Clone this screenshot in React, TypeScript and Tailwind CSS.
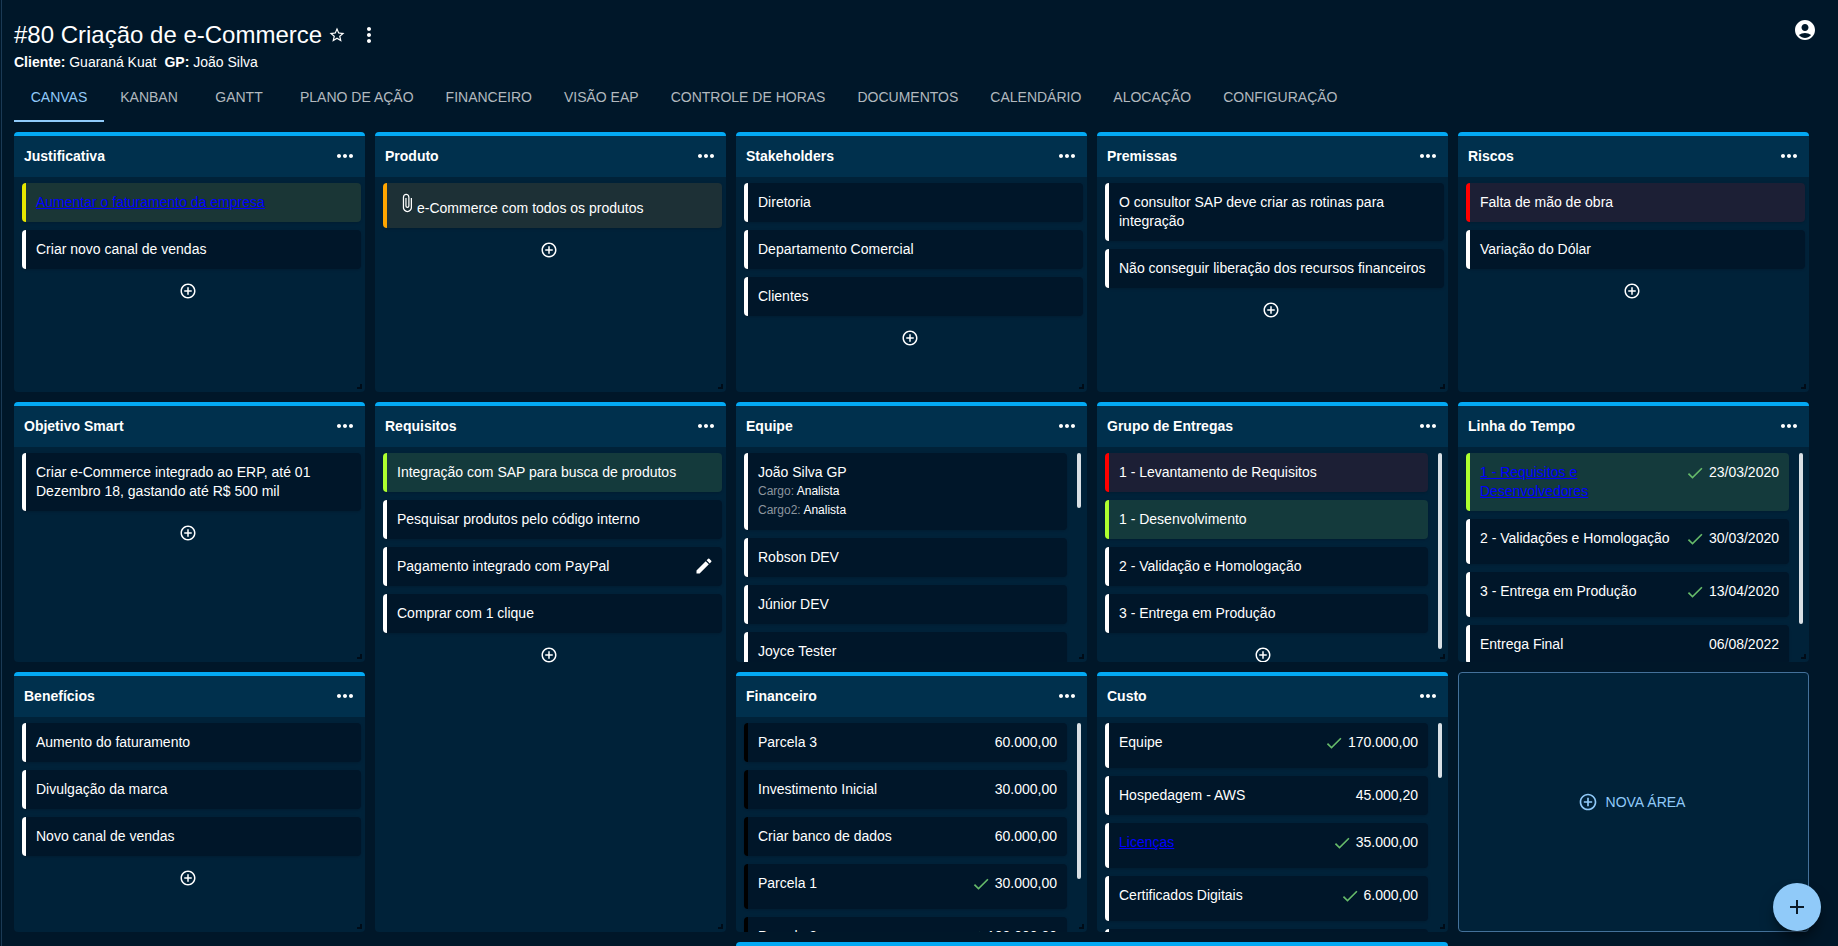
import type { ReactNode } from 'react';
import {
  MdAccountCircle,
  MdAdd,
  MdAddCircleOutline,
  MdAttachFile,
  MdCheck,
  MdEdit,
  MdMoreHoriz,
  MdMoreVert,
  MdStarBorder,
} from 'react-icons/md';

type Tone = 'white' | 'black' | 'yellow' | 'orange' | 'red' | 'green';

interface Item {
  text: string;
  tone?: Tone;
  link?: boolean;
  attachment?: boolean;
  editing?: boolean;
  value?: string;
  done?: boolean;
  details?: [string, string][];
}

interface Area {
  title: string;
  items: Item[];
  className?: string;
  // height of the scroll thumb, only for areas that overflow
  thumb?: string;
}

const tones: Record<Tone, string> = {
  white: 'border-white bg-[#001629]',
  black: 'border-black bg-[#001629]',
  yellow: 'border-[#e6e600] bg-[#1a3636]',
  orange: 'border-[#ffa500] bg-[#1d3036]',
  red: 'border-[#ff0000] bg-[#1c1f35]',
  green: 'border-[#adff2f] bg-[#143a3c]',
};

const tabs = [
  'CANVAS',
  'KANBAN',
  'GANTT',
  'PLANO DE AÇÃO',
  'FINANCEIRO',
  'VISÃO EAP',
  'CONTROLE DE HORAS',
  'DOCUMENTOS',
  'CALENDÁRIO',
  'ALOCAÇÃO',
  'CONFIGURAÇÃO',
];

const areas: Area[] = [
  {
    title: 'Justificativa',
    items: [
      { text: 'Aumentar o faturamento da empresa', tone: 'yellow', link: true },
      { text: 'Criar novo canal de vendas' },
    ],
  },
  {
    title: 'Produto',
    items: [{ text: 'e-Commerce com todos os produtos', tone: 'orange', attachment: true }],
  },
  {
    title: 'Stakeholders',
    items: [{ text: 'Diretoria' }, { text: 'Departamento Comercial' }, { text: 'Clientes' }],
  },
  {
    title: 'Premissas',
    items: [
      { text: 'O consultor SAP deve criar as rotinas para integração' },
      { text: 'Não conseguir liberação dos recursos financeiros' },
    ],
  },
  {
    title: 'Riscos',
    items: [{ text: 'Falta de mão de obra', tone: 'red' }, { text: 'Variação do Dólar' }],
  },
  {
    title: 'Objetivo Smart',
    items: [{ text: 'Criar e-Commerce integrado ao ERP, até 01 Dezembro 18, gastando até R$ 500 mil' }],
  },
  {
    title: 'Requisitos',
    className: 'row-span-2',
    items: [
      { text: 'Integração com SAP para busca de produtos', tone: 'green' },
      { text: 'Pesquisar produtos pelo código interno' },
      { text: 'Pagamento integrado com PayPal', editing: true },
      { text: 'Comprar com 1 clique' },
    ],
  },
  {
    title: 'Equipe',
    thumb: 'h-[55px]',
    items: [
      {
        text: 'João Silva GP',
        details: [
          ['Cargo', 'Analista'],
          ['Cargo2', 'Analista'],
        ],
      },
      { text: 'Robson DEV' },
      { text: 'Júnior DEV' },
      { text: 'Joyce Tester' },
    ],
  },
  {
    title: 'Grupo de Entregas',
    thumb: 'h-[196px]',
    items: [
      { text: '1 - Levantamento de Requisitos', tone: 'red' },
      { text: '1 - Desenvolvimento', tone: 'green' },
      { text: '2 - Validação e Homologação' },
      { text: '3 - Entrega em Produção' },
    ],
  },
  {
    title: 'Linha do Tempo',
    thumb: 'h-[171px]',
    items: [
      { text: '1 - Requisitos e Desenvolvedores', tone: 'green', link: true, value: '23/03/2020', done: true },
      { text: '2 - Validações e Homologação', value: '30/03/2020', done: true },
      { text: '3 - Entrega em Produção', value: '13/04/2020', done: true },
      { text: 'Entrega Final', value: '06/08/2022' },
    ],
  },
  {
    title: 'Benefícios',
    items: [{ text: 'Aumento do faturamento' }, { text: 'Divulgação da marca' }, { text: 'Novo canal de vendas' }],
  },
  {
    title: 'Financeiro',
    thumb: 'h-[156px]',
    items: [
      { text: 'Parcela 3', tone: 'black', value: '60.000,00' },
      { text: 'Investimento Inicial', tone: 'black', value: '30.000,00' },
      { text: 'Criar banco de dados', tone: 'black', value: '60.000,00' },
      { text: 'Parcela 1', tone: 'black', value: '30.000,00', done: true },
      { text: 'Parcela 2', tone: 'black', value: '100.000,00', done: true },
    ],
  },
  {
    title: 'Custo',
    thumb: 'h-[55px]',
    items: [
      { text: 'Equipe', value: '170.000,00', done: true },
      { text: 'Hospedagem - AWS', value: '45.000,20' },
      { text: 'Licenças', link: true, value: '35.000,00', done: true },
      { text: 'Certificados Digitais', value: '6.000,00', done: true },
      { text: '' },
    ],
  },
];

function ItemCard({ item }: { item: Item }) {
  return (
    <li
      className={`flex shrink-0 items-start justify-between rounded border-l-4 p-2.5 shadow-sm ${tones[item.tone ?? 'white']}`}
    >
      <div className="min-h-[19px]">
        {item.attachment && <MdAttachFile className="inline align-baseline" size={20} />}
        {item.link ? (
          <a href="#" className="text-[#0000ff] underline">
            {item.text}
          </a>
        ) : (
          item.text
        )}
        {item.details?.map(([label, value]) => (
          <p key={label} className="text-[12px] leading-[19px]">
            <span className="text-[#8c959e]">{label}:</span> {value}
          </p>
        ))}
      </div>
      {item.editing && (
        <button aria-label="Editar" className="-my-px -mr-0.5">
          <MdEdit size={20} />
        </button>
      )}
      {item.value && (
        <div className={`flex shrink-0 gap-1 ${item.done ? 'h-[25px]' : ''}`}>
          {item.done && <MdCheck className="text-[#66bb6a]" size={20} />}
          <span>{item.value}</span>
        </div>
      )}
    </li>
  );
}

function Panel({ className = '', children }: { className?: string; children?: ReactNode }) {
  return (
    <section
      className={`relative flex min-w-0 flex-col overflow-hidden rounded border-t-4 border-[#03a9f4] bg-[#002239] ${className}`}
    >
      {children}
      <span className="absolute right-[3px] bottom-[3px] size-[5px] border-r-2 border-b-2 border-[#000c18]" />
    </section>
  );
}

function AreaPanel({ area }: { area: Area }) {
  return (
    <Panel className={area.className}>
      <header className="flex h-[41px] shrink-0 items-center justify-between bg-[#00304d] pr-2 pb-px pl-2.5">
        <h2 className="font-bold">{area.title}</h2>
        <button aria-label="Opções da área">
          <MdMoreHoriz size={24} />
        </button>
      </header>
      <div className={`flex min-h-0 flex-1 pt-1.5 pl-2 ${area.thumb ? 'gap-2.5 pr-1.5' : 'pr-1'}`}>
        <div className="min-w-0 flex-1">
          <ul className="flex flex-col gap-2">
            {area.items.map((item) => (
              <ItemCard key={item.text} item={item} />
            ))}
          </ul>
          <div className="flex justify-center pt-[13px] pr-[7px]">
            <button aria-label="Adicionar item">
              <MdAddCircleOutline size={18} />
            </button>
          </div>
        </div>
        {area.thumb && <span className={`w-1 shrink-0 rounded-sm bg-[#d9e0e5] ${area.thumb}`} />}
      </div>
    </Panel>
  );
}

export default function App() {
  return (
    <div className="flex h-screen overflow-hidden bg-[#001729] font-['Liberation_Sans',Arial,sans-serif] text-[14px] leading-[19px] text-white">
      <div className="w-0.5 shrink-0 border-r border-[#1b3a55]" />
      <main className="min-w-0 flex-1 pr-[29px] pl-3">
        <div className="flex justify-between">
          <div className="pt-5">
            <div className="flex items-center">
              <h1 className="text-[24px] leading-[30px]">#80 Criação de e-Commerce</h1>
              <button aria-label="Favoritar" className="ml-1.5">
                <MdStarBorder size={18} />
              </button>
              <button aria-label="Mais opções" className="ml-[11px]">
                <MdMoreVert size={24} />
              </button>
            </div>
            <p className="mt-[3px] flex gap-2">
              <span>
                <b>Cliente:</b> Guaraná Kuat
              </span>
              <span>
                <b>GP:</b> João Silva
              </span>
            </p>
          </div>
          <button aria-label="Conta" className="-mr-2 self-start pt-[18px]">
            <MdAccountCircle size={24} />
          </button>
        </div>

        <nav className="mt-0.5 mb-2.5 flex h-12">
          {tabs.map((tab, i) => (
            <button
              key={tab}
              className={`min-w-[90px] border-b-2 px-4 ${
                i === 0 ? 'border-[#90caf9] text-[#90caf9]' : 'border-transparent text-[#b2b9bf]'
              }`}
            >
              {tab}
            </button>
          ))}
        </nav>

        <div className="grid auto-rows-[260px] grid-cols-5 gap-2.5">
          {areas.map((area) => (
            <AreaPanel key={area.title} area={area} />
          ))}
          <button className="flex items-center justify-center gap-2 rounded border border-[#44719a] bg-[#002239] pr-1 text-[#90caf9]">
            <MdAddCircleOutline size={20} />
            NOVA ÁREA
          </button>
          <Panel className="col-span-2 col-start-3" />
        </div>
      </main>

      <button
        aria-label="Adicionar"
        className="fixed right-[17px] bottom-[15px] flex size-12 items-center justify-center rounded-full bg-[#90caf9] text-[#0b1a28] shadow-lg shadow-black/50"
      >
        <MdAdd size={24} />
      </button>
    </div>
  );
}
